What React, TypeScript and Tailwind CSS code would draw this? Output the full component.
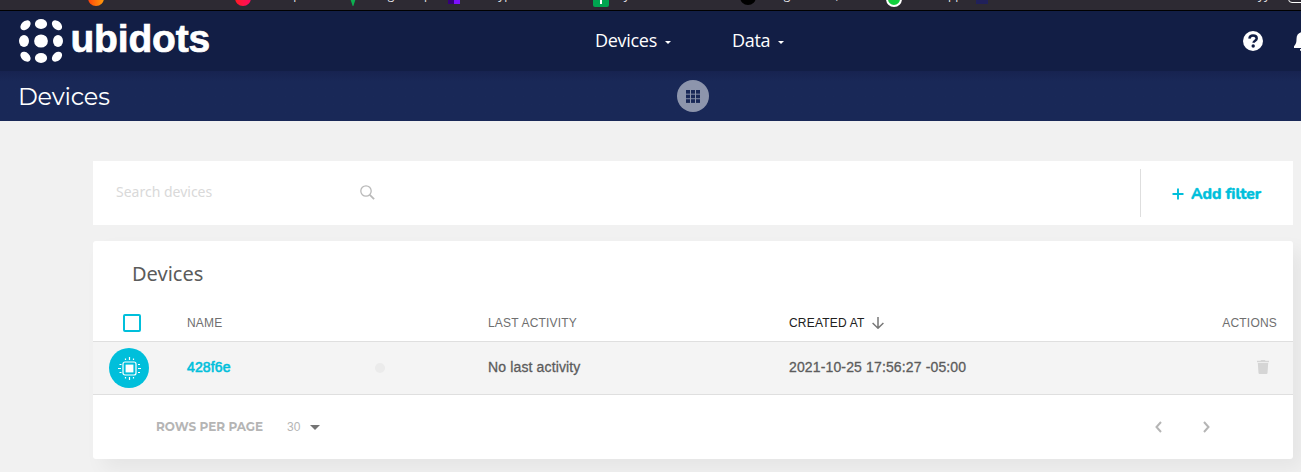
import type { ReactNode } from "react";

function Bookmark({ className, icon, children }: { className: string; icon: ReactNode; children?: ReactNode }) {
  return (
    <div className={"flex h-4 shrink-0 items-center gap-1 " + className}>
      {icon}
      <span className="whitespace-nowrap text-[12px] leading-4 tracking-[-0.1px]">{children}</span>
    </div>
  );
}

const dot = "block size-4 shrink-0 ";

function BookmarksBar() {
  return (
    <div className="flex h-[11px] items-end overflow-hidden border-b border-black bg-[#2d2a33] pb-[7px] font-['Open_Sans',sans-serif] text-[#e4e2e8]">
      <Bookmark className="w-[88px] pl-4" icon={null}>Academia</Bookmark>
      <Bookmark className="w-[147px]" icon={<i className={dot + "translate-y-[3px] rounded-full bg-linear-to-r from-[#ff3c0a] to-[#ff9a0a]"} />}>home automation</Bookmark>
      <Bookmark className="w-[110px]" icon={<i className={dot + "translate-y-[3px] rounded-full bg-linear-to-r from-[#ff1a1a] to-[#ff0560]"} />}>Desktop</Bookmark>
      <Bookmark className="w-[101px]" icon={<svg viewBox="0 0 16 16" className="size-4 translate-y-[3px]"><path d="M4 5h8L8 17z" fill="#0caf50" /></svg>}>Google Maps</Bookmark>
      <Bookmark className="w-[139px]" icon={<i className={dot + "translate-y-px scale-x-75 bg-linear-to-r from-[#35007a] from-50% to-[#7d10ff] to-50%"} />}><span className="pl-[8px]">Encrypted notes</span></Bookmark>
      <Bookmark className="w-[155px] pl-2" icon={<i className={dot + "flex translate-y-[4px] justify-center rounded-[2px] bg-[#00a550] before:h-[13px] before:w-[2px] before:bg-white"} />}>My classroom</Bookmark>
      <Bookmark className="w-[146px]" icon={<i className={dot + "translate-y-[2px] rounded-full bg-black"} />}>Design Studio, UX</Bookmark>
      <Bookmark className="w-[88px]" icon={<i className={dot + "translate-y-[4px] rounded-full border-2 border-white bg-[#12cf3e]"} />}>WhatsApp</Bookmark>
      <Bookmark className="w-[284px]" icon={<i className={dot + "translate-y-px scale-x-75 bg-[#20205a]"} />}>Electronica</Bookmark>
      <Bookmark className="w-[30px]" icon={null}>yy</Bookmark>
      <i className="h-3 w-5 shrink-0 rounded-sm border border-white" />
    </div>
  );
}

function Logo() {
  return (
    <div className="flex w-[577px] shrink-0 items-center pl-[19px] text-white">
      <svg viewBox="0 0 44 44" className="size-11" fill="currentColor">
        <ellipse cx="22" cy="5" rx="6.1" ry="5" />
        <ellipse cx="22" cy="22" rx="6.9" ry="6.6" />
        <ellipse cx="22" cy="39" rx="6.1" ry="5" />
        <ellipse cx="5" cy="22" rx="5" ry="6" />
        <ellipse cx="39" cy="22" rx="5" ry="6" />
        <ellipse cx="6.5" cy="6.3" rx="5.8" ry="4.1" transform="rotate(-43 6.5 6.3)" />
        <ellipse cx="38" cy="6.3" rx="5.8" ry="4.1" transform="rotate(43 38 6.3)" />
        <ellipse cx="6.5" cy="37.7" rx="5.8" ry="4.1" transform="rotate(43 6.5 37.7)" />
        <ellipse cx="38" cy="37.7" rx="5.8" ry="4.1" transform="rotate(-43 38 37.7)" />
      </svg>
      <span className="ml-[7.500px] -mt-[5px] font-['Liberation_Sans',sans-serif] text-[39px] font-bold leading-none tracking-[-0.2px] [-webkit-text-stroke:0.7px_white]">ubidots</span>
    </div>
  );
}

function NavItem({ label, className }: { label: string; className: string }) {
  return (
    <div className={"flex shrink-0 items-center " + className}>
      <span className="-mt-[2px] text-[18px] leading-6 tracking-[-0.3px]">{label}</span>
      <i className="ml-[8px] mt-[3px] border-x-[3.5px] border-t-[3.5px] border-x-transparent border-t-white" />
    </div>
  );
}

function Header() {
  return (
    <header className="flex h-[60px] items-center overflow-hidden bg-[#121e45] font-['Open_Sans',sans-serif] text-white">
      <Logo />
      <NavItem label="Devices" className="ml-[18px] w-[137px]" />
      <NavItem label="Data" className="w-[511px]" />
      <svg viewBox="0 0 20 20" className="size-5 shrink-0">
        <circle cx="10" cy="10" r="10" fill="white" />
        <path d="M6.400 7.600C6.700 5.500 8.200 4.600 10 4.600c2.100 0 3.700 1.100 3.700 2.900 0 2.300-3.100 2.200-3.100 4.300" fill="none" stroke="#121e45" strokeWidth="2.500" />
        <circle cx="10.200" cy="15" r="1.700" fill="#121e45" />
      </svg>
      <svg viewBox="0 0 20 20" className="ml-[30px] size-5 shrink-0" fill="white">
        <path d="M10 1c-4 0-6.500 2.800-6.500 7 0 4-.7 5-2.500 7.300V17h18v-1.700c-1.800-2.300-2.500-3.300-2.500-7.300 0-4.200-2.500-7-6.500-7zM7 18h6a3 3 0 0 1-6 0z" />
      </svg>
    </header>
  );
}

function SubHeader() {
  return (
    <div className="flex h-[50px] items-center bg-[#192857] bg-linear-to-b from-[#172350] to-[#192857] to-[10px] pl-[18px]">
      <h1 className="mt-[2px] w-[659px] font-[Montserrat,Inter,sans-serif] text-[24px] font-normal leading-8 tracking-[-0.2px] text-white">Devices</h1>
      <div className="flex size-8 items-center justify-center rounded-full bg-[#8d95ac]">
        <svg viewBox="0 0 14 13" className="h-[13px] w-[14px]" fill="#192857">
          {[0, 5, 10].map((x) => [0, 4.6, 9.2].map((y) => <rect key={x + "-" + y} x={x} y={y} width="4" height="3.7" />))}
        </svg>
      </div>
    </div>
  );
}

function FilterBar() {
  return (
    <section className="flex h-16 items-center bg-white">
      <div className="flex flex-1 items-center pb-[2px] pl-[23px]">
        <span className="w-[244px] font-['Noto_Sans',sans-serif] text-[14px] leading-5 text-[#d9d9d9]">Search devices</span>
        <svg viewBox="0 0 15 15" className="size-[15px]" fill="none" stroke="#b9b9b9" strokeWidth="1.3">
          <circle cx="6" cy="6" r="5.200" />
          <path d="M9.800 9.800l4.300 4.300" strokeWidth="1.800" />
        </svg>
      </div>
      <div className="flex h-12 w-[153px] items-center border-l border-[#dedede] pl-[31px] text-[#00bfdb]">
        <svg viewBox="0 0 12 12" className="mt-[2px] size-3" stroke="currentColor" strokeWidth="1.900"><path d="M6 .5v11M.5 6h11" /></svg>
        <span className="ml-[7px] mt-[2px] whitespace-nowrap font-[Nunito,'Open_Sans',sans-serif] text-[15.500px] font-extrabold tracking-[-0.08px] [-webkit-text-stroke:0.4px_currentColor]">Add filter</span>
      </div>
    </section>
  );
}

function ChipIcon() {
  return (
    <svg viewBox="0 0 24 24" className="size-6" fill="none" stroke="white">
      <rect x="6" y="6" width="13" height="13" rx="2" strokeWidth="1.200" />
      <rect x="9" y="9" width="7" height="7" fill="white" strokeWidth="0.800" />
      <path d="M8.500 2.500v1.500M12.500 1V4M16.500 2.500v1.500M8.500 21v1.500M12.500 21v3M16.500 21v1.500M2.500 8.500h2M1 12.500H4M2.500 16.500h2M21 8.500h2M21 12.500h3M21 16.500h2" strokeWidth="1.200" />
    </svg>
  );
}

const columns = "grid grid-cols-[94px_301px_301px_1fr_auto] items-center";

function DevicesTable() {
  return (
    <section className="mt-4 h-[218px] rounded-[3px] bg-white font-['Liberation_Sans',sans-serif] shadow-[10px_10px_20px_rgba(0,0,0,0.05)]">
      <h2 className="h-[63px] pl-[39px] pt-[19px] font-['Noto_Sans',sans-serif] text-[20px] leading-7 text-[#5b5b5b]">Devices</h2>
      <div className={columns + " h-[37px] pr-4 text-[12px] tracking-[0.2px] text-[#6f6f6f]"}>
        <i className="ml-[30px] block size-[18px] rounded-[2px] border-2 border-[#00bfdb]" />
        <span>NAME</span>
        <span>LAST ACTIVITY</span>
        <span className="flex items-center text-[#202020]">
          CREATED AT
          <svg viewBox="0 0 12 12" className="ml-[7px] size-3" fill="none" stroke="#777" strokeWidth="1.500"><path d="M6 0v11M.6 6L6 11.200 11.400 6" /></svg>
        </span>
        <span>ACTIONS</span>
      </div>
      <div className={columns + " h-[54px] border-y border-[#dfdfdf] bg-[#f4f4f4] pr-[24px] text-[14px] tracking-[0.14px] text-[#5c5c5c]"}>
        <span className="ml-4 flex size-10 items-center justify-center rounded-full bg-[#00bfdb]"><ChipIcon /></span>
        <span className="flex items-center">
          <span className="w-[188px] pb-[2px] text-[#00bfdb] [-webkit-text-stroke:0.6px_currentColor]">428f6e</span>
          <i className="size-[10px] rounded-full bg-[#ebebeb]" />
        </span>
        <span className="pb-[2px] [-webkit-text-stroke:0.3px_currentColor]">No last activity</span>
        <span className="pb-[2px] [-webkit-text-stroke:0.3px_currentColor]">2021-10-25 17:56:27 -05:00</span>
        <svg viewBox="0 0 12 14" className="-mt-[2px] h-[14px] w-3" fill="#d5d5d5"><path d="M0 .8h3.500L4.200 0h3.600l.7.800H12v1.400H0zM.8 3h10.400l-.7 10q-.1 1-1 1h-7q-.9 0-1-1z" /></svg>
      </div>
      <footer className="flex h-16 items-center pl-[63px] text-[12px] text-[#b5b5b5]">
        <span className="w-[131px] font-[Montserrat,Inter,sans-serif] font-bold">ROWS PER PAGE</span>
        <span>30</span>
        <i className="ml-[10px] mt-[1px] border-x-[5px] border-t-[5px] border-x-transparent border-t-[#747474]" />
        <div className="ml-auto mr-[83px] flex gap-[41px]">
          <svg viewBox="0 0 7 12" className="h-3 w-[7px]" fill="none" stroke="#b5b5b5" strokeWidth="2"><path d="M6 1L1.500 6 6 11" /></svg>
          <svg viewBox="0 0 7 12" className="h-3 w-[7px]" fill="none" stroke="#b5b5b5" strokeWidth="2"><path d="M1 1l4.500 5L1 11" /></svg>
        </div>
      </footer>
    </section>
  );
}

export default function App() {
  return (
    <div className="h-[472px] w-[1301px] overflow-hidden bg-[#f1f1f1]">
      <BookmarksBar />
      <Header />
      <SubHeader />
      <main className="w-[1293px] pl-[93px] pt-10">
        <FilterBar />
        <DevicesTable />
      </main>
    </div>
  );
}
